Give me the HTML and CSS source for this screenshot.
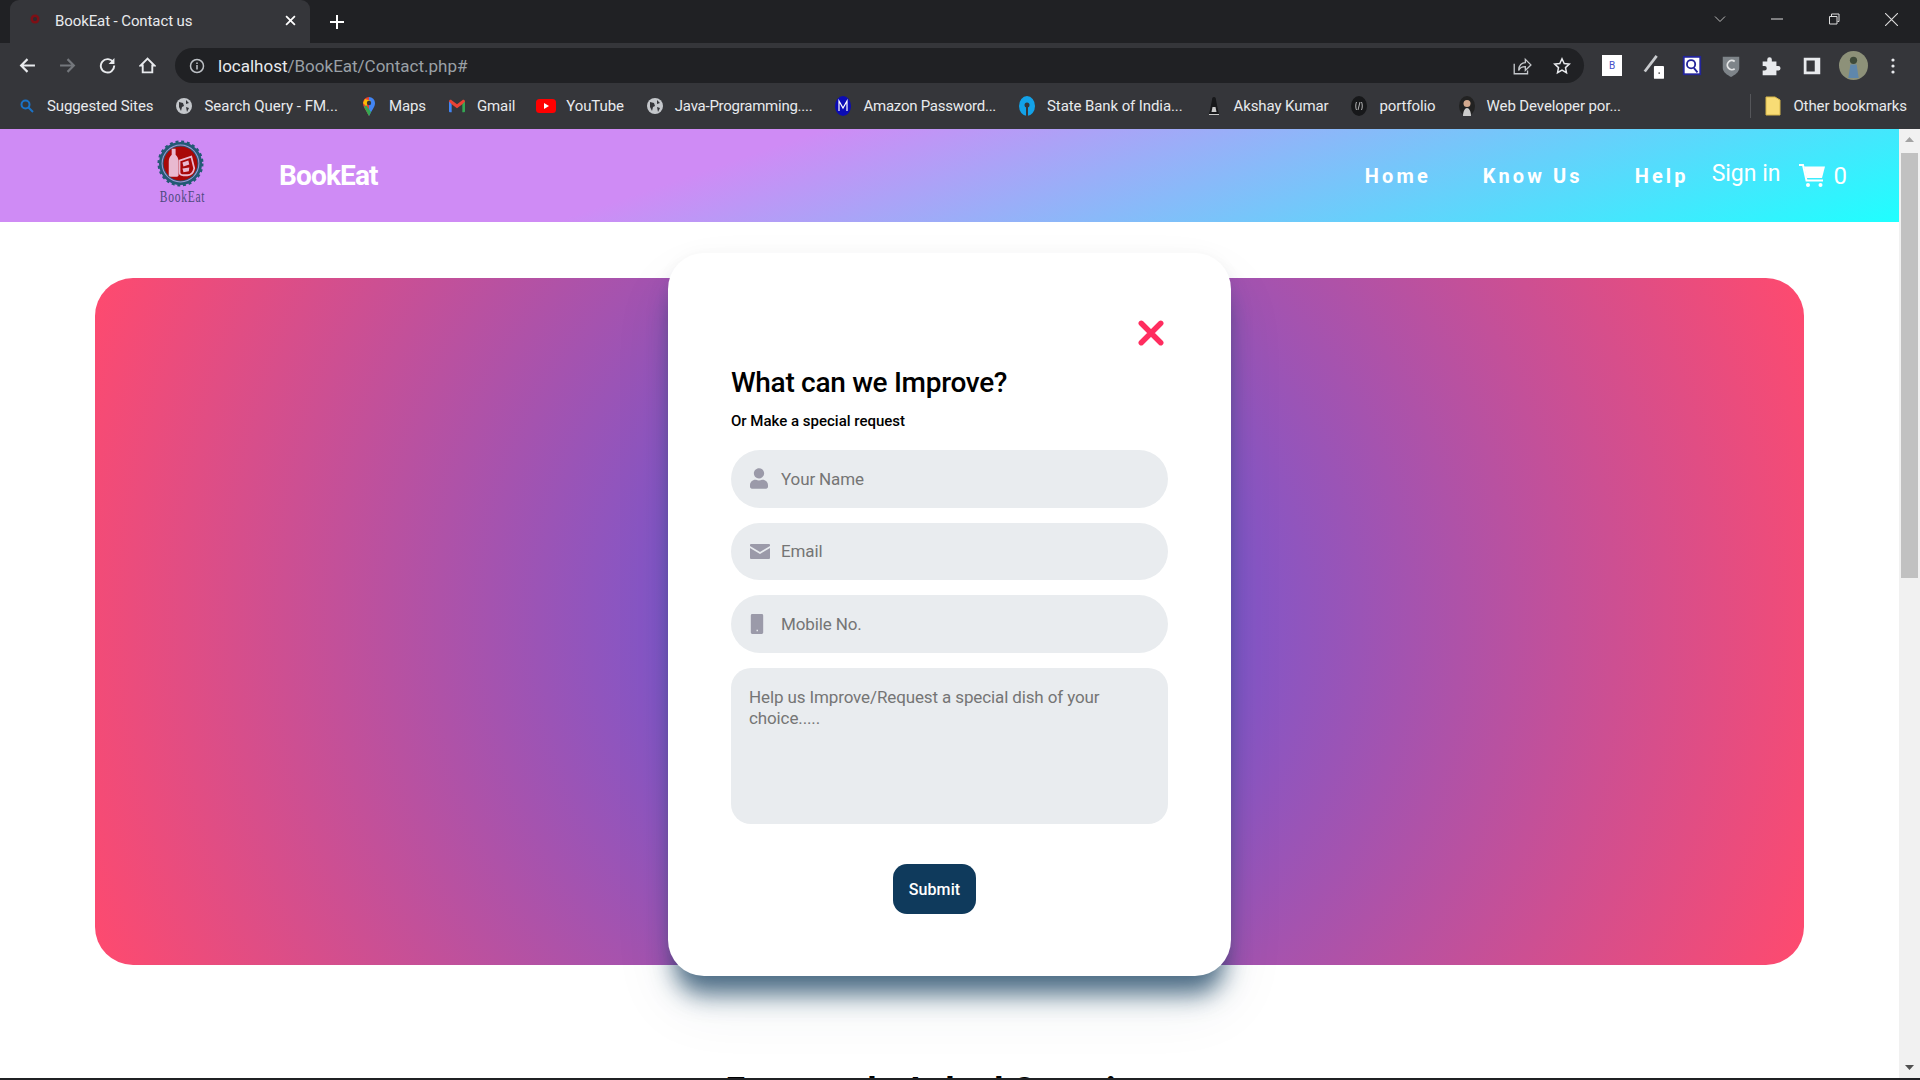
FILE: index.html
```html
<!DOCTYPE html>
<html lang="en">
<head>
<meta charset="utf-8">
<title>BookEat - Contact us</title>
<link rel="stylesheet" href="styles.css">
</head>
<body>
<div class="chrome">
  <div class="tabstrip">
    <div class="tab">
      <svg class="favicon" viewBox="0 0 16 16"><circle cx="8" cy="6" r="4.500" fill="#7d1016"/><circle cx="8" cy="6" r="2" fill="#2a2c31"/></svg>
      <span class="tab-title">BookEat - Contact us</span>
      <svg class="tab-close" viewBox="0 0 10 10"><path d="M1 1l8 8M9 1l-8 8" stroke="#fff" stroke-width="1.600"/></svg>
    </div>
    <svg class="new-tab" viewBox="0 0 14 14"><path d="M7 0v14M0 7h14" stroke="#fff" stroke-width="2"/></svg>
    <div class="win-controls">
      <svg class="win-icon" viewBox="0 0 12 12"><path d="M1 3.500l5 5 5-5" fill="none" stroke="#bbb" stroke-width="1"/></svg>
      <svg class="win-icon" viewBox="0 0 12 12"><path d="M0 6h12" stroke="#ddd" stroke-width="1"/></svg>
      <svg class="win-icon" viewBox="0 0 12 12"><path d="M1.500 3.500h7.500v7.500h-7.500zM3.500 3V1h7.500v7.500H9.500" fill="none" stroke="#ddd" stroke-width="1"/></svg>
      <svg class="win-icon win-close" viewBox="0 0 12 12"><path d="M0 0l12 12M12 0L0 12" stroke="#ddd" stroke-width="1"/></svg>
    </div>
  </div>
  <div class="toolbar">
    <svg class="nav-icon" viewBox="0 0 16 16"><path d="M15 8H2M8 2L2 8l6 6" fill="none" stroke="#e8eaed" stroke-width="2"/></svg>
    <svg class="nav-icon" viewBox="0 0 16 16"><path d="M1 8h13M8 2l6 6-6 6" fill="none" stroke="#74777c" stroke-width="2"/></svg>
    <svg class="nav-icon" viewBox="0 0 16 16"><path d="M13.500 5.200A6.300 6.300 0 1 0 14.300 8" fill="none" stroke="#e8eaed" stroke-width="1.800"/><path d="M14.500 1v5.500H9z" fill="#e8eaed"/></svg>
    <svg class="nav-icon nav-icon-home" viewBox="0 0 16 16"><path d="M8 1.500L1.500 8H3.500v6.500h9V8h2z" fill="none" stroke="#e8eaed" stroke-width="1.800"/></svg>
    <div class="omnibox">
      <svg class="info-icon" viewBox="0 0 16 16"><circle cx="8" cy="8" r="6.500" fill="none" stroke="#bdc1c6" stroke-width="1.500"/><path d="M8 7v4.500M8 4.500v1.500" stroke="#bdc1c6" stroke-width="1.500"/></svg>
      <span class="url"><span class="url-host">localhost</span>/BookEat/Contact.php#</span>
      <svg class="omni-icon share" viewBox="0 0 18 18"><path d="M2 7v9h12v-3" fill="none" stroke="#c4c7cb" stroke-width="1.200"/><path d="M6 13c0-5 3-7 6-7V3l5 5-5 5V9.500c-3 0-5 1-6 3.500z" fill="none" stroke="#c4c7cb" stroke-width="1.200"/></svg>
      <svg class="omni-icon" viewBox="0 0 18 18"><path d="M9 1.800l2.200 4.700 5.100.6-3.800 3.500 1 5.100L9 13.200l-4.500 2.500 1-5.100-3.800-3.500 5.100-.6z" fill="none" stroke="#e8eaed" stroke-width="1.500"/></svg>
    </div>
    <div class="extensions">
      <span class="ext-b">B</span>
      <svg class="ext" viewBox="0 0 24 28"><path d="M3 20L16 3" stroke="#c9cbce" stroke-width="3"/><rect x="13" y="14" width="11" height="14" rx="1" fill="#fff"/><rect x="18" y="21" width="1.500" height="1.500" fill="#333"/></svg>
      <svg class="ext" viewBox="0 0 24 28"><rect x="3" y="4" width="18" height="19" fill="#fff" stroke="#23259a" stroke-width="2"/><circle cx="11" cy="12" r="4.500" fill="none" stroke="#23259a" stroke-width="2"/><path d="M14 16l4 5" stroke="#23259a" stroke-width="2"/></svg>
      <svg class="ext" viewBox="0 0 24 28"><path d="M3 4h18v12c0 5-5 8-9 10-4-2-9-5-9-10z" fill="#7e8489"/><path d="M16 9a5 5 0 1 0 0 8" fill="none" stroke="#e3e4e5" stroke-width="2"/></svg>
      <svg class="ext ext-puzzle" viewBox="0 0 24 28"><path d="M4 9h5V7a2.500 2.500 0 0 1 5 0v2h5v5h2a2.500 2.500 0 0 1 0 5h-2v5H4v-5h2a2.500 2.500 0 0 0 0-5H4z" fill="#e8eaed"/></svg>
      <svg class="ext ext-panel" viewBox="0 0 24 28"><path d="M3 5h18v18H3z" fill="#e8eaed"/><path d="M6 8h9v12H6z" fill="#35363a"/></svg>
      <svg class="avatar" viewBox="0 0 28 28"><circle cx="14" cy="14" r="14" fill="#8d9179"/><circle cx="14" cy="9" r="3.500" fill="#3e4a3a"/><path d="M9 26l2-13h6l2 13z" fill="#5f87ac"/></svg>
      <svg class="dots" viewBox="0 0 4 18"><circle cx="2" cy="3" r="1.600" fill="#e8eaed"/><circle cx="2" cy="9" r="1.600" fill="#e8eaed"/><circle cx="2" cy="15" r="1.600" fill="#e8eaed"/></svg>
    </div>
  </div>
  <div class="bookmarks">
    <div class="bm"><svg class="bm-icon" viewBox="0 0 16 16"><circle cx="6.500" cy="6.500" r="4" fill="none" stroke="#1a73c8" stroke-width="2"/><path d="M9.500 9.500L14 14" stroke="#1a73c8" stroke-width="2"/></svg>Suggested Sites</div>
    <div class="bm bm-loose"><svg class="bm-icon" viewBox="0 0 16 16"><circle cx="8" cy="8" r="8" fill="#c4c7cb"/><path d="M3 4l4 1 1 3-2 1-1 4-2-4zM10 2l3 3-3 1zM10 9l3 1-2 4z" fill="#35363a"/></svg>Search Query - FM...</div>
    <div class="bm"><svg class="bm-icon bm-tall" viewBox="0 0 16 20"><path d="M8 20C5 14 2 11 2 7a6 6 0 0 1 6-6z" fill="#ea4335"/><path d="M8 20c3-6 6-9 6-13a6 6 0 0 0-6-6z" fill="#4285f4"/><path d="M3 11c2 3 3 6 5 9l2-4-5-7z" fill="#34a853"/><path d="M4 3L2 7l3 3 5-5z" fill="#fbbc04"/><circle cx="8" cy="7" r="2.200" fill="#35363a"/></svg>Maps</div>
    <div class="bm"><svg class="bm-icon" viewBox="0 0 18 14"><path d="M0 2h3v12H1a1 1 0 0 1-1-1z" fill="#4285f4"/><path d="M15 2h3v11a1 1 0 0 1-1 1h-2z" fill="#34a853"/><path d="M0 2c0-2 2-2.500 3-1.500L9 5l6-4.500c1-1 3-.5 3 1.500l-3 3-6 4.500L3 5z" fill="#ea4335"/></svg>Gmail</div>
    <div class="bm"><svg class="bm-icon bm-wide" viewBox="0 0 20 14"><rect width="20" height="14" rx="3.500" fill="#f00"/><path d="M8 4l5 3-5 3z" fill="#fff"/></svg>YouTube</div>
    <div class="bm bm-tight"><svg class="bm-icon" viewBox="0 0 16 16"><circle cx="8" cy="8" r="8" fill="#c4c7cb"/><path d="M3 4l4 1 1 3-2 1-1 4-2-4zM10 2l3 3-3 1zM10 9l3 1-2 4z" fill="#35363a"/></svg>Java-Programming....</div>
    <div class="bm bm-tight"><svg class="bm-icon bm-tall" viewBox="0 0 16 20"><ellipse cx="8" cy="10" rx="8" ry="10" fill="#0b0bb5"/><path d="M4 15V5l4 7 4-7v10" fill="none" stroke="#fff" stroke-width="1.200"/></svg>Amazon Password...</div>
    <div class="bm"><svg class="bm-icon bm-tall" viewBox="0 0 16 20"><ellipse cx="8" cy="10" rx="8" ry="10" fill="#13a2e8"/><circle cx="8" cy="9" r="2.500" fill="#35363a"/><rect x="7" y="10" width="2" height="10" fill="#35363a"/></svg>State Bank of India...</div>
    <div class="bm"><svg class="bm-icon bm-tall" viewBox="0 0 16 20"><path d="M8 1c1.500 0 2 1 2 3l2 10 1 4H3l1-4 2-10c0-2 .5-3 2-3z" fill="#17181a"/><path d="M6.500 11h3l1 5h-5zM3 18h10v1H3z" fill="#c9c9c9"/></svg>Akshay Kumar</div>
    <div class="bm"><svg class="bm-icon bm-tall" viewBox="0 0 16 20"><ellipse cx="8" cy="10" rx="8" ry="10" fill="#17181a"/><path d="M5.500 6c-1 2-1 6 0 8M10.500 6c1 2 1 6 0 8M9 6l-2 8" fill="none" stroke="#ddd" stroke-width=".8"/></svg>portfolio</div>
    <div class="bm"><svg class="bm-icon bm-tall" viewBox="0 0 16 20"><ellipse cx="8" cy="10" rx="8" ry="10" fill="#222"/><circle cx="8" cy="7.500" r="3.500" fill="#d3a98e"/><path d="M4 20c0-5 2-8 4-8s4 3 4 8z" fill="#ccc"/></svg>Web Developer por...</div>
    <div class="bm-other">
      <svg class="bm-icon bm-tall" viewBox="0 0 16 20"><path d="M1 1h9l5 3v15H1z" fill="#f8dc75" stroke="#d6b64b"/></svg>Other bookmarks
    </div>
  </div>
</div>
<div class="viewport">
  <div class="page">
    <nav class="navbar">
      <div class="brand-logo">
        <svg class="logo-mark" viewBox="0 0 48 48">
          <circle cx="24" cy="24" r="22" fill="#235a74" stroke="#235a74" stroke-width="3" stroke-dasharray="3 2.760"/>
          <circle cx="24" cy="24" r="19.300" fill="#a49ad8"/>
          <circle cx="24" cy="24" r="18.300" fill="#235a74"/>
          <circle cx="24" cy="24" r="17.300" fill="#a80808"/>
          <path d="M15 9h4v6c2 2 3 4 3 7v14c0 1-1 1.500-2 1.500h-6c-1.500 0-2-1-2-1.500V22c0-3 1-5 3-7z" fill="#e9b9d0"/>
          <path d="M23 21l12-4 3 12c-1 5-3 7-7 7h-4c-2 0-4-1-4-3z" fill="#a80808" stroke="#e9b9d0" stroke-width="1.800"/>
          <path d="M26 23l6-2 1 4-6 2zM26 29l7-1-.500 4-5.500 1z" fill="#e9b9d0"/>
        </svg>
        <span class="logo-word">BookEat</span>
      </div>
      <a class="brand-name">BookEat</a>
      <div class="nav-links">
        <a class="nav-link">Home</a>
        <a class="nav-link">Know Us</a>
        <a class="nav-link">Help</a>
      </div>
      <a class="signin">Sign in</a>
      <svg class="cart" viewBox="0 0 26 23">
        <path d="M0 1h4l3.500 15.500H24" fill="none" stroke="#fff" stroke-width="2"/>
        <path d="M5 2.500h21l-3 11.500H7.500z" fill="#fff"/>
        <circle cx="9" cy="21" r="2" fill="#fff"/>
        <circle cx="21.500" cy="21" r="2" fill="#fff"/>
      </svg>
      <span class="cart-count">0</span>
    </nav>
    <main class="content">
      <section class="hero"></section>
      <form class="card">
        <div class="card-close">
          <svg class="close-x" viewBox="0 0 24 24"><path d="M3 3l18 18M21 3L3 21" stroke="#ff2d5f" stroke-width="5" stroke-linecap="round"/></svg>
        </div>
        <h2 class="card-title">What can we Improve?</h2>
        <p class="card-sub">Or Make a special request</p>
        <div class="field">
          <span class="field-slot"><svg class="icon-person" viewBox="0 0 448 512"><path d="M224 256c70.700 0 128-57.300 128-128S294.700 0 224 0 96 57.300 96 128s57.300 128 128 128zm89.600 32h-16.700c-22.200 10.200-46.900 16-72.900 16s-50.600-5.800-72.900-16h-16.700C60.200 288 0 348.200 0 422.400V464c0 26.500 21.500 48 48 48h352c26.500 0 48-21.500 48-48v-41.600c0-74.200-60.200-134.400-134.400-134.400z" fill="#9b9aa9"/></svg></span>
          <span class="placeholder">Your Name</span>
        </div>
        <div class="field">
          <span class="field-slot"><svg class="icon-mail" viewBox="0 0 20 15"><path d="M1 0h18a1 1 0 0 1 1 1v1l-10 6L0 2V1a1 1 0 0 1 1-1zM0 4l10 6 10-6v10a1 1 0 0 1-1 1H1a1 1 0 0 1-1-1z" fill="#9b9aa9"/></svg></span>
          <span class="placeholder">Email</span>
        </div>
        <div class="field">
          <span class="field-slot"><svg class="icon-phone" viewBox="0 0 13 21"><path d="M1.500 0h10A1.500 1.500 0 0 1 13 1.500v18a1.500 1.500 0 0 1-1.500 1.500h-10A1.500 1.500 0 0 1 0 19.500v-18A1.500 1.500 0 0 1 1.500 0zM6 16.500v1.500h1.500v-1.500z" fill="#9b9aa9" fill-rule="evenodd"/></svg></span>
          <span class="placeholder">Mobile No.</span>
        </div>
        <div class="textarea"><span class="placeholder">Help us Improve/Request a special dish of your choice.....</span></div>
        <div class="submit-row"><button type="button" class="submit">Submit</button></div>
      </form>
      <h2 class="faq-title">Frequently Asked Questions</h2>
    </main>
  </div>
  <div class="scrollbar">
    <svg class="sb-arrow" viewBox="0 0 9 5"><path d="M4.500 0L9 5H0z" fill="#a3a3a3"/></svg>
    <div class="sb-thumb"></div>
    <div class="sb-track"></div>
    <svg class="sb-arrow" viewBox="0 0 9 5"><path d="M0 0h9L4.500 5z" fill="#505050"/></svg>
  </div>
</div>
<div class="taskbar-edge"></div>
</body>
</html>
```

FILE: styles.css
```css
* { box-sizing: border-box; }
html, body { margin: 0; height: 100%; }
body {
  width: 1920px; height: 1080px; overflow: hidden;
  display: flex; flex-direction: column;
  font-family: Roboto, "Liberation Sans", sans-serif;
  background: #fff;
}
.chrome { flex: none; height: 129px; display: flex; flex-direction: column; background: #35363a; color: #e8eaed; }
.tabstrip { height: 43px; flex: none; background: #202124; display: flex; align-items: flex-end; padding-left: 10px; }
.tab { width: 300px; height: 43px; background: #35363a; border-radius: 9px 9px 0 0; display: flex; align-items: center; padding: 0 14px 2px 17px; }
.favicon { width: 16px; height: 16px; flex: none; }
.tab-title { flex: 1; margin-left: 12px; font-size: 15px; color: #e8eaed; letter-spacing: -.1px; }
.tab-close { width: 11px; height: 11px; }
.new-tab { width: 14px; height: 14px; margin: 0 0 14px 20px; }
.win-controls { margin-left: auto; display: flex; align-self: flex-start; align-items: center; height: 38px; }
.win-icon { width: 12px; height: 12px; margin-right: 45px; }
.win-close { width: 13px; height: 13px; margin-right: 22px; }
.toolbar { height: 45px; flex: none; display: flex; align-items: center; padding-left: 19px; }
.nav-icon { width: 17px; height: 17px; margin-right: 23px; flex: none; }
.nav-icon-home { margin-right: 19px; }
.omnibox { width: 1409px; height: 35px; background: #202124; border-radius: 18px; display: flex; align-items: center; padding: 0 13px 0 14px; }
.info-icon { width: 16px; height: 16px; }
.url { margin-left: 13px; font-size: 17px; color: #9aa0a6; flex: 1; }
.url-host { color: #e8eaed; }
.omni-icon { width: 18px; height: 18px; margin-left: 21px; }
.share { width: 20px; height: 20px; }
.extensions { display: flex; align-items: center; flex: 1; padding-left: 18px; }
.ext-b { width: 20px; height: 21px; background: #fff; color: #4450c8; font-size: 10px; display: flex; align-items: center; justify-content: center; margin-right: 20px; }
.ext { width: 22px; height: 26px; margin-right: 17px; flex: none; }
.ext-puzzle { margin-right: 20px; }
.ext-panel { margin-right: 18px; }
.avatar { width: 29px; height: 29px; flex: none; margin-left: -2px; }
.dots { width: 4px; height: 18px; margin-left: 23px; }
.bookmarks { height: 41px; flex: none; display: flex; align-items: center; padding: 0 13px 5px 19px; font-size: 15px; letter-spacing: -.1px; }
.bm { display: flex; align-items: center; margin-right: 23px; white-space: nowrap; color: #e8eaed; }
.bm-loose { letter-spacing: 0; }
.bm-tight { letter-spacing: -.25px; }
.bm-icon { width: 16px; height: 16px; margin-right: 12px; flex: none; }
.bm-tall { height: 20px; }
.bm-wide { width: 20px; margin: 0 10px 0 -2px; }
.bm-other { margin-left: auto; display: flex; align-items: center; border-left: 1px solid #55565a; padding-left: 14px; height: 24px; white-space: nowrap; }
.viewport { flex: 1; min-height: 0; display: flex; }
.page { flex: 1; min-width: 0; overflow: hidden; background: #fff; }
.navbar { height: 93px; display: flex; align-items: center; color: #fff; padding: 0 52px 0 157px; background: linear-gradient(161deg, #cf8bf5 38%, #1fffff 100%); }
.brand-logo { width: 47px; display: flex; flex-direction: column; align-items: center; margin-top: -8px; }
.logo-mark { width: 47px; height: 47px; }
.logo-word { font-family: "Liberation Serif", serif; font-size: 16px; letter-spacing: 1px; color: #4d4a80; margin: 3px 0 0 4px; line-height: 13px; white-space: nowrap; transform: scaleX(.72); }
.brand-name { font-size: 28px; font-weight: 700; margin-left: 75px; letter-spacing: -.85px; }
.nav-links { margin-left: auto; display: flex; gap: 52px; }
.nav-link { font-size: 20px; font-weight: 700; letter-spacing: 3.100px; }
.signin { font-size: 23px; margin: -4px 0 0 23px; }
.cart { width: 26px; height: 23px; margin-left: 18px; }
.cart-count { font-size: 24px; margin-left: 9px; }
.content { position: relative; padding: 56px 95px 0; }
.hero { height: 687px; border-radius: 38px; background: radial-gradient(circle farthest-corner, #4a5cf0 0%, #ff4a6e 100%); }
.card { position: absolute; left: 668px; top: 31px; width: 563px; height: 723px; background: #fff; border-radius: 36px; padding: 67px 63px 0; box-shadow: 0 25px 24px -7px rgba(15, 58, 92, .72), 0 30px 60px rgba(15, 58, 92, .08), 0 0 16px rgba(0, 0, 0, .03); }
.card-close { display: flex; justify-content: flex-end; padding-right: 4px; }
.close-x { width: 26px; height: 26px; }
.card-title { margin: 20px 0 0; font-size: 28px; line-height: 34px; font-weight: 500; color: #000; letter-spacing: -.3px; }
.card-sub { margin: 10.500px 0 19.500px; font-size: 15px; line-height: 20px; font-weight: 500; color: #000; }
.field { height: 57.500px; border-radius: 29px; background: #e9ecef; display: flex; align-items: center; padding-left: 19px; margin-bottom: 15px; }
.field-slot { width: 31px; flex: none; display: flex; align-items: center; }
.icon-person { width: 18px; height: 21px; }
.icon-mail { width: 20px; height: 15px; }
.icon-phone { width: 14px; height: 20px; }
.placeholder { font-size: 17px; color: #757575; letter-spacing: -.12px; }
.textarea { height: 156px; border-radius: 20px; background: #e9ecef; padding: 19px 18px; line-height: 20px; }
.submit-row { margin-top: 40.500px; display: flex; padding-left: 162px; }
.submit { width: 83px; height: 50px; border: 0; border-radius: 14px; background: #0f3a5c; color: #fff; font: 500 16px Roboto, sans-serif; letter-spacing: .1px; }
.faq-title { margin: 0; position: absolute; left: 0; right: 0; top: 847px; text-align: center; font-size: 35.500px; font-weight: 700; color: #000; line-height: 1.2; white-space: nowrap; }
.scrollbar { width: 21px; flex: none; background: #f1f1f1; display: flex; flex-direction: column; align-items: center; }
.sb-arrow { width: 9px; height: 5px; margin: 8px 0; flex: none; }
.sb-thumb { width: 17px; height: 425px; background: #c1c1c1; margin-top: 3px; }
.sb-track { flex: 1; }
.taskbar-edge { flex: none; height: 2px; background: #202124; }
```
